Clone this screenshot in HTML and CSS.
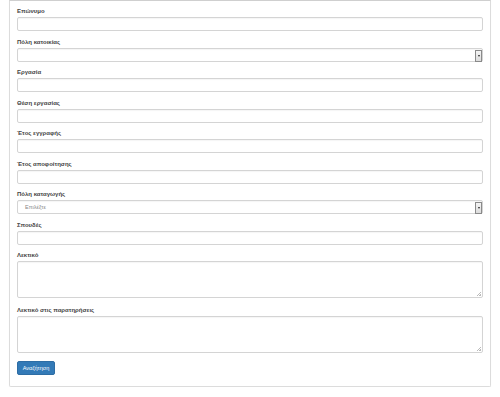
FILE: index.html
```html
<!DOCTYPE html>
<html lang="el">
<head>
<meta charset="utf-8">
<link rel="stylesheet" href="styles.css">
</head>
<body>
<div class="panel">
  <form class="form">
    <div class="group"><label class="lbl">Επώνυμο</label><div class="input"></div></div>
    <div class="group"><label class="lbl">Πόλη κατοικίας</label><div class="input select"><span class="arrow"><span class="tri"></span></span></div></div>
    <div class="group"><label class="lbl">Εργασία</label><div class="input"></div></div>
    <div class="group"><label class="lbl">Θέση εργασίας</label><div class="input"></div></div>
    <div class="group"><label class="lbl">Έτος εγγραφής</label><div class="input"></div></div>
    <div class="group"><label class="lbl">Έτος αποφοίτησης</label><div class="input"></div></div>
    <div class="group"><label class="lbl">Πόλη καταγωγής</label><div class="input select"><span class="ph">Επιλέξτε</span><span class="arrow"><span class="tri"></span></span></div></div>
    <div class="group"><label class="lbl">Σπουδές</label><div class="input"></div></div>
    <div class="group group-area"><label class="lbl">Λεκτικό</label><div class="input area"><span class="grip"></span></div></div>
    <div class="group group-area"><label class="lbl">Λεκτικό στις παρατηρήσεις</label><div class="input area"><span class="grip"></span></div></div>
    <div class="actions"><span class="btn">Αναζήτηση</span></div>
  </form>
</div>
</body>
</html>
```
FILE: styles.css
```css
html, body { margin: 0; padding: 0; background: #fff; }
body { font-family: "Liberation Sans", Arial, sans-serif; color: #333; }
.panel {
  margin-left: 9px;
  width: 482px;
  box-sizing: border-box;
  border: 1px solid #dcdcdc;
  border-top-color: #cfcfcf;
  border-radius: 0 0 2px 2px;
  box-shadow: 0 1px 1px rgba(0,0,0,0.05);
  padding: 6px 7px 11px;
}
.form { display: flex; flex-direction: column; }
.group { display: flex; flex-direction: column; margin-bottom: 6.5px; }
.group-area { margin-bottom: 8px; }
.lbl { display: block; font-size: 6px; font-weight: bold; line-height: 8px; height: 8px; margin-bottom: 2px; color: #444; }
.input {
  position: relative;
  height: 14px;
  box-sizing: border-box;
  border: 1px solid #d4d4d4;
  border-radius: 2px;
  background: #fff;
  box-shadow: inset 0 1px 1px rgba(0,0,0,0.04);
  display: flex;
  align-items: center;
}
.area { height: 37px; }
.ph { font-size: 5.5px; color: #888; padding-left: 7px; }
.arrow {
  position: absolute;
  right: 0;
  top: 1px;
  width: 5px;
  height: 10px;
  border: 1px solid #8a8a8a;
  background: linear-gradient(#f4f4f4, #dcdcdc);
  display: flex;
  align-items: center;
  justify-content: center;
}
.tri {
  width: 0; height: 0;
  border-left: 1.5px solid transparent;
  border-right: 1.5px solid transparent;
  border-top: 2px solid #222;
}
.grip {
  position: absolute;
  right: 1px;
  bottom: 1px;
  width: 4px;
  height: 4px;
  background: linear-gradient(135deg, transparent 45%, #bbb 45%, #bbb 60%, transparent 60%, transparent 75%, #bbb 75%);
}
.actions { display: flex; padding-top: 0; }
.btn {
  display: inline-flex;
  align-items: center;
  justify-content: center;
  width: 38px;
  height: 14px;
  box-sizing: border-box;
  background: #337ab7;
  border: 1px solid #2e6da4;
  border-radius: 2px;
  color: #fff;
  font-size: 5.5px;
}
```
